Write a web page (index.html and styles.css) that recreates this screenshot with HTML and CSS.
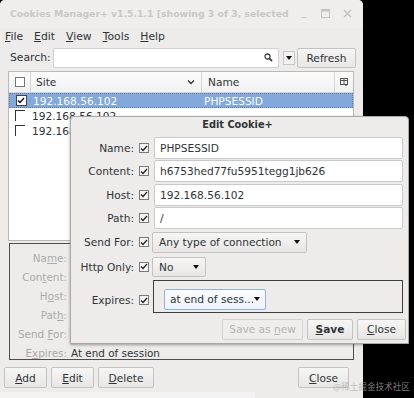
FILE: index.html
```html
<!DOCTYPE html>
<html>
<head>
<meta charset="utf-8">
<link rel="stylesheet" href="styles.css">
</head>
<body>
<div class="screen">
  <div class="win">
    <div class="titlebar">
      <span class="title">Cookies Manager+ v1.5.1.1 [showing 3 of 3, selected</span>
      <span class="wctl">
        <span class="wmin">_</span>
        <svg class="wmax" width="9" height="9" viewBox="0 0 9 9"><rect x="0.5" y="0.5" width="8" height="8" fill="none" stroke="#c4c4c4" stroke-width="1"/><line x1="0" y1="1.5" x2="9" y2="1.5" stroke="#c4c4c4" stroke-width="2"/></svg>
        <svg class="wclose" width="9" height="9" viewBox="0 0 9 9"><path d="M1 1L8 8M8 1L1 8" stroke="#c4c4c4" stroke-width="1.6"/></svg>
      </span>
    </div>
    <div class="menubar">
      <span class="mi"><u>F</u>ile</span>
      <span class="mi"><u>E</u>dit</span>
      <span class="mi"><u>V</u>iew</span>
      <span class="mi"><u>T</u>ools</span>
      <span class="mi"><u>H</u>elp</span>
    </div>
    <div class="searchrow">
      <span class="slabel">Search:</span>
      <div class="sinput">
        <svg class="mag" width="9" height="9" viewBox="0 0 9 9"><circle cx="3.5" cy="3.5" r="2.5" fill="none" stroke="#444" stroke-width="1.3"/><path d="M5.3 5.3L8 8" stroke="#444" stroke-width="1.8"/></svg>
      </div>
      <div class="sdrop"><span class="tri"></span></div>
      <div class="btn refresh"><span>Refresh</span></div>
    </div>
    <div class="tree">
      <div class="thead">
        <div class="hc hcheck"><span class="cb"></span></div>
        <div class="hc hsite"><span>Site</span>
          <svg class="chev" width="8" height="6" viewBox="0 0 8 6"><path d="M1 1.5L4 4.5L7 1.5" fill="none" stroke="#333" stroke-width="1.3"/></svg>
        </div>
        <div class="hc hname"><span>Name</span></div>
        <div class="hc hpick">
          <svg width="9" height="9" viewBox="0 0 9 9"><rect x="0.5" y="0.5" width="7" height="6" fill="none" stroke="#555" stroke-width="1"/><line x1="0.5" y1="2.5" x2="7.5" y2="2.5" stroke="#555"/><line x1="4" y1="0.5" x2="4" y2="6.5" stroke="#555"/><path d="M5 6.5L7 6.5L6 8.5Z" fill="#333"/></svg>
        </div>
      </div>
      <div class="trow selected">
        <div class="tc tcheck"><span class="cbon"><svg width="8" height="7" viewBox="0 0 8 7"><path d="M1 3.5L3 5.5L7 1" fill="none" stroke="#111" stroke-width="1.4"/></svg></span></div>
        <div class="tc tsite">192.168.56.102</div>
        <div class="tc tname">PHPSESSID</div>
      </div>
      <div class="trow">
        <div class="tc tcheck"><span class="cboff"></span></div>
        <div class="tc tsite">192.168.56.102</div>
        <div class="tc tname"></div>
      </div>
      <div class="trow">
        <div class="tc tcheck"><span class="cboff"></span></div>
        <div class="tc tsite">192.168.56.102</div>
        <div class="tc tname"></div>
      </div>
    </div>
    <div class="details">
      <div class="dl">Na<u>m</u>e:</div><div class="dv"></div>
      <div class="dl">Con<u>t</u>ent:</div><div class="dv"></div>
      <div class="dl">H<u>o</u>st:</div><div class="dv"></div>
      <div class="dl">Pat<u>h</u>:</div><div class="dv"></div>
      <div class="dl">Send <u>F</u>or:</div><div class="dv"></div>
      <div class="dl">E<u>x</u>pires:</div><div class="dv dark">At end of session</div>
    </div>
    <div class="btnrow">
      <div class="btn bAdd"><span><u>A</u>dd</span></div>
      <div class="btn bEdit"><span><u>E</u>dit</span></div>
      <div class="btn bDel"><span><u>D</u>elete</span></div>
      <div class="spacer"></div>
      <div class="btn bClose"><span><u>C</u>lose</span></div>
    </div>
    <div class="bottomstrip"></div>
  </div>

  <div class="dialog">
    <div class="dtitle">Edit Cookie+</div>
    <div class="frow">
      <div class="fl">Name:</div>
      <div class="fc"><span class="dcb"><svg width="8" height="7" viewBox="0 0 8 7"><path d="M1 3.5L3 5.5L7 1" fill="none" stroke="#222" stroke-width="1.3"/></svg></span></div>
      <div class="finput">PHPSESSID</div>
    </div>
    <div class="frow">
      <div class="fl">Content:</div>
      <div class="fc"><span class="dcb"><svg width="8" height="7" viewBox="0 0 8 7"><path d="M1 3.5L3 5.5L7 1" fill="none" stroke="#222" stroke-width="1.3"/></svg></span></div>
      <div class="finput">h6753hed77fu5951tegg1jb626</div>
    </div>
    <div class="frow">
      <div class="fl">Host:</div>
      <div class="fc"><span class="dcb"><svg width="8" height="7" viewBox="0 0 8 7"><path d="M1 3.5L3 5.5L7 1" fill="none" stroke="#222" stroke-width="1.3"/></svg></span></div>
      <div class="finput">192.168.56.102</div>
    </div>
    <div class="frow">
      <div class="fl">Path:</div>
      <div class="fc"><span class="dcb"><svg width="8" height="7" viewBox="0 0 8 7"><path d="M1 3.5L3 5.5L7 1" fill="none" stroke="#222" stroke-width="1.3"/></svg></span></div>
      <div class="finput">/</div>
    </div>
    <div class="frow rsend">
      <div class="fl">Send For:</div>
      <div class="fc"><span class="dcb"><svg width="8" height="7" viewBox="0 0 8 7"><path d="M1 3.5L3 5.5L7 1" fill="none" stroke="#222" stroke-width="1.3"/></svg></span></div>
      <div><div class="combo csend"><span>Any type of connection</span><span class="tri"></span></div></div>
    </div>
    <div class="frow rhttp">
      <div class="fl">Http Only:</div>
      <div class="fc"><span class="dcb"><svg width="8" height="7" viewBox="0 0 8 7"><path d="M1 3.5L3 5.5L7 1" fill="none" stroke="#222" stroke-width="1.3"/></svg></span></div>
      <div><div class="combo chttp"><span>No</span><span class="tri"></span></div></div>
    </div>
    <div class="frow rexp">
      <div class="fl lexp">Expires:</div>
      <div class="fc fcexp"><span class="dcb"><svg width="8" height="7" viewBox="0 0 8 7"><path d="M1 3.5L3 5.5L7 1" fill="none" stroke="#222" stroke-width="1.3"/></svg></span></div>
      <div class="group"><div class="combo cexp"><span>at end of sess...</span><span class="tri"></span></div></div>
    </div>
    <div class="dbtns">
      <div class="btn disabled bSaveNew"><span>Save as <u>n</u>ew</span></div>
      <div class="btn bSave"><span><u>S</u>ave</span></div>
      <div class="btn bDClose"><span><u>C</u>lose</span></div>
    </div>
  </div>

  <div class="watermark">@稀土掘金技术社区</div>
</div>
</body>
</html>
```

FILE: styles.css
```css
* { box-sizing: border-box; }
html, body { margin: 0; padding: 0; background: #000; }
body { font-family: "DejaVu Sans", sans-serif; font-size: 10.4px; color: #2e3436; }
u { text-decoration: underline; text-underline-offset: 1px; }

.screen { position: relative; width: 414px; height: 398px; overflow: hidden; background: #000; }

.win {
  width: 363px; height: 398px; background: #edeceb;
  border-radius: 5px 5px 0 0;
  display: flex; flex-direction: column;
}

.titlebar {
  height: 28px; display: flex; align-items: center;
  padding: 0 0 0 10px; color: #c8c8c8; font-weight: bold; font-size: 9.3px;
  background: #efeeed; border-radius: 5px 5px 0 0;
}
.title { flex: 1; white-space: nowrap; overflow: hidden; }
.wctl { display: flex; align-items: center; gap: 0; width: 66px; flex: none; }
.wmin { width: 14px; text-align: center; font-size: 10px; position: relative; top: -2px; }
.wmax { margin-left: 10px; }
.wclose { margin-left: 13px; }

.menubar { height: 18px; display: flex; align-items: center; padding-left: 5px; font-size: 10.8px; color: #2e3436; }
.mi { margin-right: 11px; }

.searchrow { height: 24px; display: flex; align-items: center; padding-top: 0; }
.slabel { margin-left: 10px; width: 43px; font-size: 10.8px; }
.sinput {
  width: 226px; height: 20px; background: #fff; border: 1px solid #d0d0d0; border-radius: 2px;
  display: flex; align-items: center; justify-content: flex-end; padding-right: 5px;
}
.sdrop {
  width: 12px; height: 14px; margin-left: 4px; border: 1px solid #c8c8c8; background: #f2f2f2;
  display: flex; align-items: center; justify-content: center;
}
.tri { display: inline-block; width: 0; height: 0; border-left: 3.5px solid transparent; border-right: 3.5px solid transparent; border-top: 4px solid #111; }
.btn {
  height: 21px; border: 1px solid #c3c3c3; border-radius: 2px;
  background: linear-gradient(#f6f6f5, #e7e6e4);
  display: flex; align-items: center; justify-content: center; color: #2e3436; font-size: 10.6px;
  white-space: nowrap;
}
.refresh { width: 59px; height: 20px; margin-left: 2px; }

.tree {
  margin: 2px 0 0 8px; width: 346px; height: 171px; background: #fff; border: 1px solid #b9b9b9;
}
.thead { height: 21px; display: grid; grid-template-columns: 22px 171px 1fr 18px; border-bottom: 1px solid #d8d8d8; background: linear-gradient(#fbfbfb, #f1f1f1); }
.hc { display: flex; align-items: center; font-size: 10.6px; }
.hcheck { justify-content: center; border-right: 1px solid #d6d6d6; }
.hsite { padding-left: 5px; border-right: 1px solid #d6d6d6; justify-content: space-between; padding-right: 6px; }
.hname { padding-left: 6px; border-right: 1px solid #d6d6d6; }
.hpick { justify-content: center; }
.cb { width: 10px; height: 10px; border: 1px solid #777; background: #fff; display: block; }

.trow { height: 15px; display: grid; grid-template-columns: 22px 171px 1fr; align-items: center; font-size: 10.6px; }
.trow.selected { background: #82a8dc; color: #fff; border: 1px dotted #5d7fb2; height: 15px; }
.tcheck { display: flex; justify-content: center; }
.tsite { padding-left: 1px; white-space: nowrap; }
.tname { padding-left: 1px; white-space: nowrap; }
.cbon { width: 11px; height: 11px; background: #fff; border: 1px solid #444; display: flex; align-items: center; justify-content: center; }
.cboff { width: 10px; height: 11px; border-top: 1px solid #333; border-left: 1px solid #333; background: #fff; display: block; }

.details {
  margin: 2px 0 0 9px; width: 345px; height: 117px; border: 1px solid #4e4e4e;
  display: grid; grid-template-columns: 57px 1fr; grid-auto-rows: 19px; column-gap: 4px;
  padding-top: 4px; align-items: center;
}
.dl { text-align: right; color: #aaa; white-space: nowrap; font-size: 10.4px; }
.dv { white-space: nowrap; }
.dv.dark { color: #2e3436; }

.btnrow { margin-top: 7px; display: flex; padding-left: 4px; padding-right: 14px; gap: 4px; }
.bAdd { width: 43px; }
.bEdit { width: 43px; }
.bDel { width: 56px; }
.spacer { flex: 1; }
.bClose { width: 51px; }
.bottomstrip { margin-top: 4px; height: 6px; width: 255px; background: #f3f3f3; }

.dialog {
  position: absolute; left: 70px; top: 116px; width: 339px; height: 228px;
  background: #edeceb; border: 1px solid #a9a9a9; border-radius: 4px 4px 0 0;
  box-shadow: 0 1px 3px rgba(0,0,0,0.35);
}
.dtitle { height: 17px; text-align: center; font-weight: bold; font-size: 9.8px; line-height: 14px; padding-top: 1px; color: #2e3436; padding-right: 4px; }
.frow { display: grid; grid-template-columns: 63px 12px 1fr; column-gap: 4px; height: 22px; margin-top: 1.4px; align-items: center; padding-right: 5px; }
.dtitle + .frow { margin-top: 3px; }
.fl { text-align: right; white-space: nowrap; font-size: 10.6px; }
.fc { display: flex; justify-content: center; }
.dcb { width: 10px; height: 10px; border: 1px solid #7a7a7a; background: #f6f6f6; display: flex; align-items: center; justify-content: center; }
.finput { height: 22px; background: #fff; border: 1px solid #c9c9c9; border-radius: 2px; display: flex; align-items: center; padding-left: 5px; font-size: 10.6px; white-space: nowrap; }

.combo {
  height: 21px; border: 1px solid #c3c3c3; border-radius: 2px; background: linear-gradient(#f6f6f5, #e7e6e4);
  display: flex; align-items: center; justify-content: space-between; padding: 0 6px 0 6px; font-size: 10.6px; white-space: nowrap;
}
.rsend { height: 21px; margin-top: 2.5px; }
.csend { width: 155px; margin-left: -2px; }
.rhttp { height: 20px; margin-top: 4px; }
.chttp { width: 54px; height: 20px; margin-left: -2px; }
.rexp { height: 33px; margin-top: 3px; align-items: stretch; }
.lexp, .fcexp { align-self: end; height: 21px; display: flex; align-items: center; justify-content: flex-end; margin-bottom: 2px; }
.fcexp { justify-content: center; }
.group { border: 1px solid #3e3e3e; margin-left: -1px; padding: 8px 0 0 10px; }
.cexp { width: 102px; height: 21px; border: 1px solid #8fb3e0; background: linear-gradient(#fafcff, #eef3fa); padding-left: 5px; }

.dbtns { display: flex; justify-content: flex-end; gap: 4px; margin-top: 6px; padding-right: 2px; }
.bSaveNew { width: 81px; color: #b4b4b4; background: #eeedec; border-color: #d3d3d3; }
.bSave { width: 46px; font-weight: bold; }
.bDClose { width: 49px; }

.watermark {
  position: absolute; left: 333px; top: 380px; font-family: "Noto Sans CJK SC", sans-serif;
  font-size: 8.6px; color: rgba(170,170,170,0.75); white-space: nowrap;
}
```
